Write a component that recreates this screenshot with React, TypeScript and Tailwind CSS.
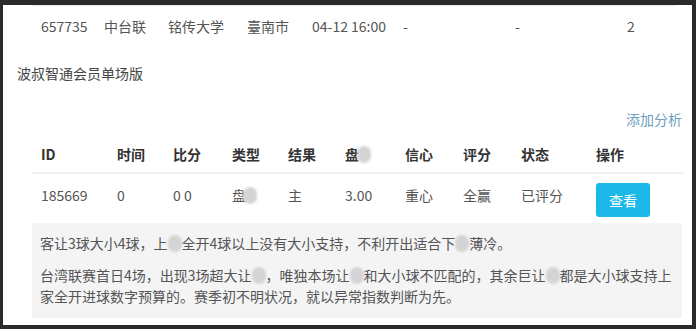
import React, { FC } from 'react';

const Blob: FC<{ className?: string }> = ({ className = '' }) => (
  <span
    className={`inline-block w-[14px] h-[17px] align-[-3px] rounded-full bg-[#d4d4d4] blur-[1px] ${className}`}
  />
);

const topRow = [
  { w: 'w-[63px]', t: '657735' },
  { w: 'w-[64px]', t: '中台联' },
  { w: 'w-[79px]', t: '铭传大学' },
  { w: 'w-[65px]', t: '臺南市' },
  { w: 'w-[91px]', t: '04-12 16:00' },
  { w: 'w-[112px]', t: '-' },
  { w: 'w-[112px]', t: '-' },
  { w: 'w-[40px]', t: '2' },
];

const colW = [
  'w-[76px]',
  'w-[56px]',
  'w-[59px]',
  'w-[56px]',
  'w-[57px]',
  'w-[60px]',
  'w-[58px]',
  'w-[58px]',
  'w-[75px]',
  'w-[80px]',
];

const App: FC = () => {
  const head: React.ReactNode[] = [
    'ID',
    '时间',
    '比分',
    '类型',
    '结果',
    <span key="pk">
      盘<Blob className="-ml-[2px]" />
    </span>,
    '信心',
    '评分',
    '状态',
    '操作',
  ];
  const row: React.ReactNode[] = [
    '185669',
    '0',
    '0 0',
    <span key="lx">
      盘<Blob className="-ml-[3px]" />
    </span>,
    '主',
    '3.00',
    '重心',
    '全赢',
    '已评分',
    <button
      key="btn"
      className="w-[54px] h-[34px] rounded-[3px] bg-[#1cb8e8] text-white text-[14px]"
    >
      查看
    </button>,
  ];

  return (
    <div className="w-[696px] h-[329px] bg-[#2a2a2a] pt-[5px] pl-[3px] pr-[4px] pb-[4px] font-['Noto_Sans_CJK_SC',sans-serif]">
      <div className="h-full bg-white text-[14px] text-[#555]">
        <div className="ml-[29px] mr-[15px] pt-[1px] border-t border-[#ececec]">
          <div className="flex items-center h-[38px] pl-[9px]">
            {topRow.map((c, i) => (
              <div key={i} className={`${c.w} shrink-0`}>
                {c.t}
              </div>
            ))}
          </div>
        </div>

        <div className="pl-[14px] mt-[18px] leading-[20px] text-[#444]">波叔智通会员单场版</div>

        <div className="flex justify-end pr-[10px] mt-[26px] leading-[20px] text-[#6c9ec0]">添加分析</div>

        <div className="ml-[29px] mr-[8px] mt-[7px]">
          <div className="flex items-center h-[38px] pl-[9px] border-b-2 border-[#f0f0f0] font-bold text-[#333]">
            {head.map((h, i) => (
              <div key={i} className={`${colW[i]} shrink-0`}>
                {h}
              </div>
            ))}
          </div>
          <div className="flex items-start h-[49px] pl-[9px] pt-[11px] leading-[20px]">
            {row.map((h, i) => (
              <div key={i} className={`${colW[i]} shrink-0 ${i === 9 ? '-mt-[2px]' : ''}`}>
                {h}
              </div>
            ))}
          </div>
        </div>

        <div className="ml-[29px] mr-[10px] h-[95px] bg-[#f4f4f5] px-[8px] pt-[10px] text-[14px] leading-[21px] text-[#555]">
          <p>
            客让3球大小4球，上
            <Blob />
            全开4球以上没有大小支持，不利开出适合下
            <Blob />
            薄冷。
          </p>
          <p className="mt-[11px]">
            台湾联赛首日4场，出现3场超大让
            <Blob />
            ，唯独本场让
            <Blob />
            和大小球不匹配的，其余巨让
            <Blob />
            都是大小球支持上
            <br />
            家全开进球数字预算的。赛季初不明状况，就以异常指数判断为先。
          </p>
        </div>
      </div>
    </div>
  );
};

export default App;
